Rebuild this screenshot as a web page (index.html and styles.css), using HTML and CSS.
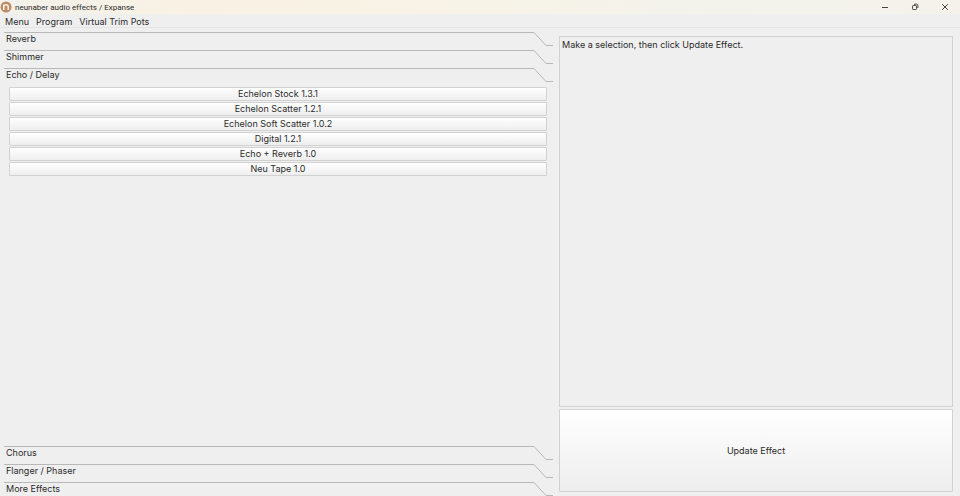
FILE: index.html
```html
<!DOCTYPE html>
<html lang="en">
<head>
<meta charset="utf-8">
<title>neunaber audio effects / Expanse</title>
<link rel="stylesheet" href="styles.css">
</head>
<body>
<svg class="defs" aria-hidden="true">
  <symbol id="tab-end" viewBox="0 0 20 14">
    <path d="M0 .5H1L13 13.5H20" fill="none" stroke="#b8b8b8"/>
  </symbol>
</svg>
<header class="titlebar">
  <svg class="logo" viewBox="0 0 12 12" aria-hidden="true">
    <circle cx="6" cy="6" r="5.5" fill="#b98c66"/>
    <path d="M3.8 9V3.5M3.8 5.5C4 3 8.200 3 8.200 5.500V9" fill="none" stroke="#fff5e8" stroke-width="1.500"/>
  </svg>
  <h1 class="title">neunaber audio effects / Expanse</h1>
  <div class="controls">
    <button class="control" type="button" aria-label="Minimize">
      <svg viewBox="0 0 8 8"><path d="M1 4.500H7"/></svg>
    </button>
    <button class="control" type="button" aria-label="Restore">
      <svg viewBox="0 0 8 8"><rect x="1.500" y="2.500" width="4" height="4" rx=".8"/><path d="M3 1.200H5.500Q6.900 1.200 6.900 2.600V5"/></svg>
    </button>
    <button class="control" type="button" aria-label="Close">
      <svg viewBox="0 0 8 8"><path d="M1.200 1.200L6.800 6.800M6.800 1.200L1.200 6.800"/></svg>
    </button>
  </div>
</header>
<nav class="menubar">
  <button class="menu" type="button">Menu</button>
  <button class="menu" type="button">Program</button>
  <button class="menu" type="button">Virtual Trim Pots</button>
</nav>
<main class="workspace">
  <section class="categories">
    <button class="tab" type="button"><span class="tab-label">Reverb</span><svg class="tab-end"><use href="#tab-end"/></svg></button>
    <button class="tab" type="button"><span class="tab-label">Shimmer</span><svg class="tab-end"><use href="#tab-end"/></svg></button>
    <button class="tab" type="button" aria-expanded="true"><span class="tab-label">Echo / Delay</span><svg class="tab-end"><use href="#tab-end"/></svg></button>
    <div class="effects">
      <button class="effect" type="button">Echelon Stock 1.3.1</button>
      <button class="effect" type="button">Echelon Scatter 1.2.1</button>
      <button class="effect" type="button">Echelon Soft Scatter 1.0.2</button>
      <button class="effect" type="button">Digital 1.2.1</button>
      <button class="effect" type="button">Echo + Reverb 1.0</button>
      <button class="effect" type="button">Neu Tape 1.0</button>
    </div>
    <button class="tab" type="button"><span class="tab-label">Chorus</span><svg class="tab-end"><use href="#tab-end"/></svg></button>
    <button class="tab" type="button"><span class="tab-label">Flanger / Phaser</span><svg class="tab-end"><use href="#tab-end"/></svg></button>
    <button class="tab" type="button"><span class="tab-label">More Effects</span><svg class="tab-end"><use href="#tab-end"/></svg></button>
  </section>
  <section class="details">
    <p class="message">Make a selection, then click Update Effect.</p>
    <button class="update" type="button">Update Effect</button>
  </section>
</main>
</body>
</html>
```
FILE: styles.css
```css
* {
  box-sizing: border-box;
}

body {
  margin: 0;
  height: 100vh;
  display: flex;
  flex-direction: column;
  background: #efefef;
  color: #2b2b2b;
  font: 9px/12px Inter, "Liberation Sans", sans-serif;
}

button {
  margin: 0;
  padding: 0;
  border: 0;
  background: none;
  color: inherit;
  font: inherit;
}

.defs {
  position: absolute;
  width: 0;
  height: 0;
}

.titlebar {
  display: flex;
  align-items: center;
  height: 14px;
  gap: 3px;
  background: linear-gradient(90deg, #f3f1ea, #f9f2e4 20%, #f8f3e6 45%, #f3f3ec 75%, #f5f2ec);
}

.logo {
  width: 12px;
  height: 12px;
}

.title {
  flex: 1;
  margin: 0;
  padding-top: 2px;
  font: 8px/12px Roboto, "Open Sans", sans-serif;
}

.controls {
  display: flex;
}

.control {
  display: grid;
  place-items: center;
  width: 30px;
  height: 14px;
}

.control svg {
  width: 8px;
  height: 8px;
  fill: none;
  stroke: #444;
}

.menubar {
  display: flex;
  align-items: flex-end;
  gap: 7px;
  height: 14px;
  padding-left: 5px;
  border-bottom: 1px solid #e5e5e5;
}

.menu {
  height: 12px;
  line-height: 14px;
}

.workspace {
  flex: 1;
  min-height: 0;
  display: grid;
  grid-template-columns: 549fr 394fr;
  gap: 6px;
  padding: 4px 7px 0 4px;
}

.categories {
  display: flex;
  flex-direction: column;
  gap: 4px;
}

.tab {
  display: flex;
  height: 14px;
  text-align: left;
}

.tab-label {
  flex: 1;
  height: 14px;
  padding: 0 2px;
  border-top: 1px solid #b8b8b8;
}

.tab-end {
  width: 20px;
  height: 14px;
}

.effects {
  flex: 1;
  display: flex;
  flex-direction: column;
  gap: 1px;
  padding: 1px 6px 0 5px;
}

.effect,
.update {
  border: 1px solid #d2d2d2;
  border-radius: 1px;
  background: linear-gradient(#fff, #eee);
}

.effect {
  height: 14px;
}

.details {
  display: flex;
  flex-direction: column;
  gap: 2px;
  padding: 4px 0;
}

.message {
  flex: 1;
  margin: 0;
  padding: 2px;
  border: 1px solid #d2d2d2;
}

.update {
  height: 83px;
}
```
